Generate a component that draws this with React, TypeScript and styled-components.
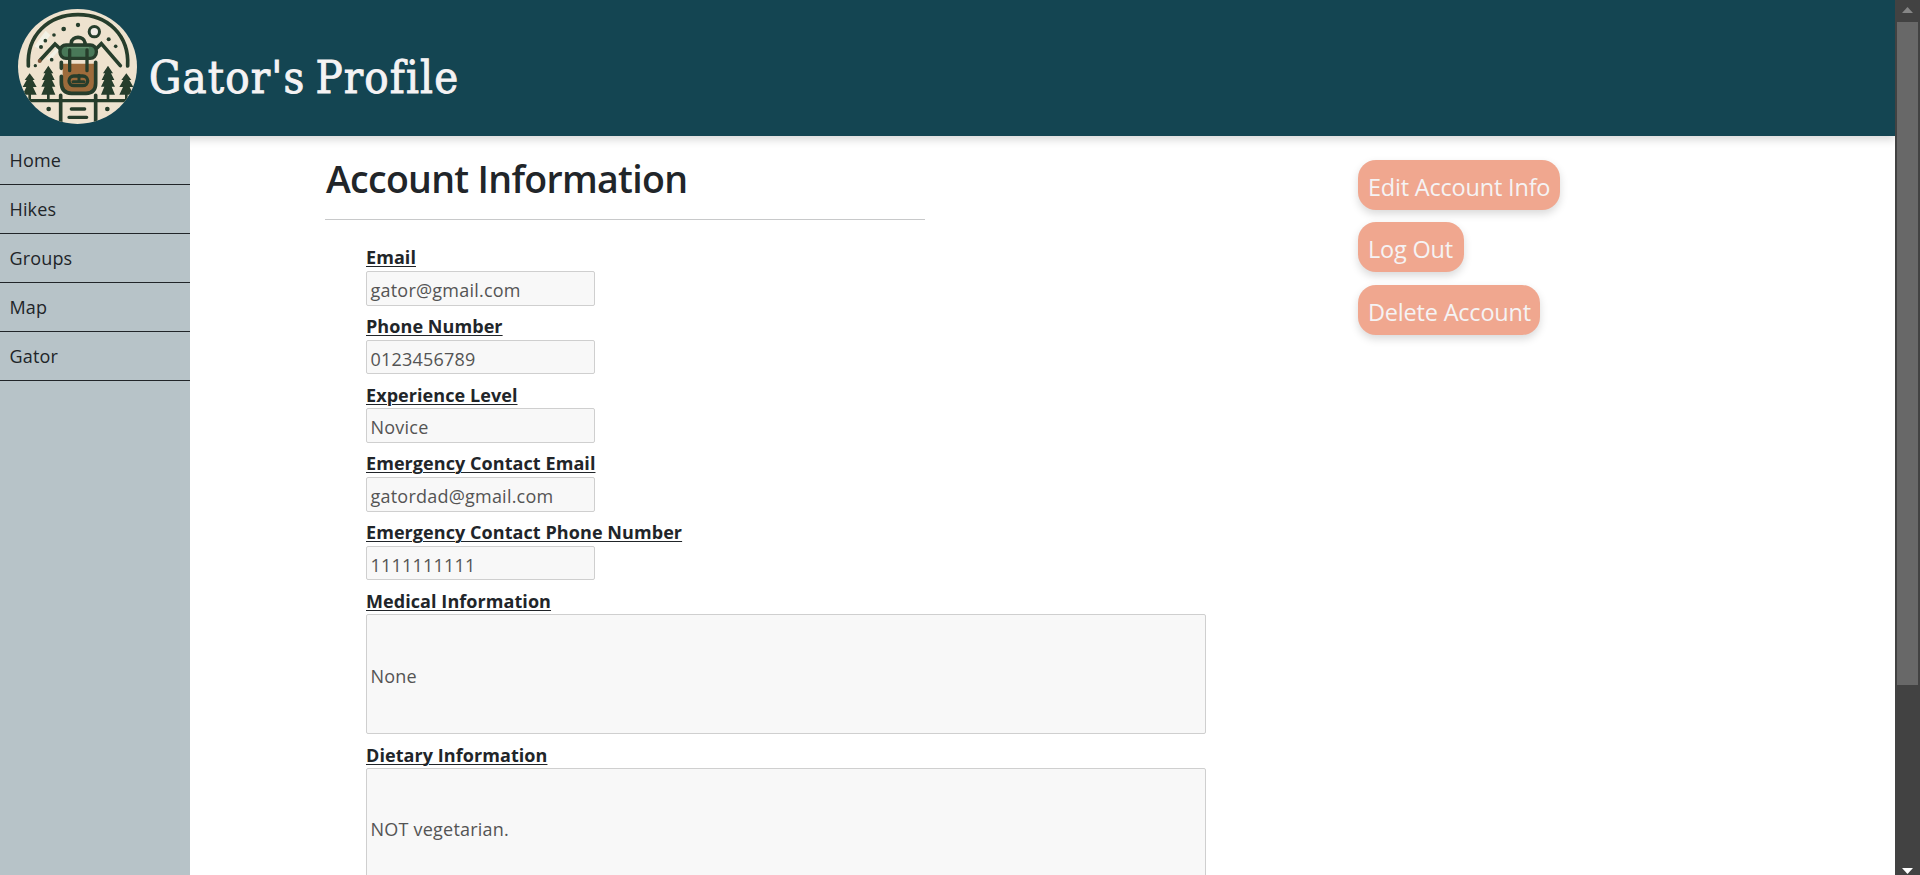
import React from "react";
import styled, { createGlobalStyle } from "styled-components";

const GlobalStyle = createGlobalStyle`
  *, *::before, *::after { box-sizing: border-box; }
  body {
    margin: 0;
    overflow: hidden;
    background: #fff;
    color: #212529;
    font-family: "Open Sans", "Noto Sans", sans-serif;
  }
`;

const Window = styled.div`
  display: flex;
  height: 875px;
  overflow: hidden;
`;

const Page = styled.div`
  display: flex;
  flex-direction: column;
  flex: 1;
  min-width: 0;
`;

const Header = styled.header`
  display: flex;
  flex: none;
  height: 136px;
  padding: 9px 0 0 18px;
  background: #144552;
  box-shadow: 0 4px 8px rgba(0, 0, 0, 0.15);
`;

const Title = styled.h1`
  margin: 33px 0 0 12px;
  color: #f5f3f4;
  font: 400 45px/72px "DejaVu Serif Condensed", "DejaVu Serif", serif;
  font-stretch: condensed;
  letter-spacing: 1.15px;
  word-spacing: -4px;
  -webkit-text-stroke: 0.9px #f5f3f4;
  white-space: nowrap;
`;

const Body = styled.div`
  display: flex;
  flex: 1;
  min-height: 0;
`;

const Sidebar = styled.nav`
  position: relative;
  flex: none;
  width: 190px;
  background: #b7c3c8;
`;

const NavLink = styled.a`
  display: block;
  height: 49px;
  padding-left: 9.5px;
  border-bottom: 1px solid #212529;
  font-size: 18px;
  font-weight: 400;
  letter-spacing: 0.15px;
  line-height: 49px;
`;

const Account = styled.main`
  flex: none;
  width: 1168px;
  padding: 16px 0 0 135px;
`;

const Heading = styled.h2`
  width: 600px;
  height: 68px;
  margin: 0;
  border-bottom: 1px solid #c8c9ca;
  font-size: 37.5px;
  font-weight: 600;
  letter-spacing: -0.7px;
  line-height: 54px;
  text-indent: 1px;
  white-space: nowrap;
`;

const Fields = styled.div`
  padding: 17px 0 0 41px;
`;

const Label = styled.div`
  height: 34px;
  padding-top: 8.4px;
  font-size: 18px;
  font-weight: 700;
  letter-spacing: 0.07px;
  line-height: 24px;
  text-decoration: underline;
  text-decoration-thickness: 1px;
  text-underline-offset: 2px;
  text-decoration-skip-ink: auto;
  white-space: nowrap;
`;

const Value = styled.div<{ $large?: boolean }>`
  display: flex;
  align-items: center;
  width: ${(p) => (p.$large ? "840px" : "229px")};
  height: ${(p) => (p.$large ? "119.7px" : "34.7px")};
  padding: 3px 3.5px 0;
  border: 1px solid #cfcfcf;
  border-radius: 2px;
  background: #f8f8f8;
  color: #545454;
  font-size: 18px;
  font-weight: 400;
  letter-spacing: 0.22px;
  white-space: nowrap;
`;

const Actions = styled.div`
  display: flex;
  flex-direction: column;
  align-items: flex-start;
  gap: 12.4px;
  padding-top: 24px;
`;

const Action = styled.button<{ $width: number }>`
  width: ${(p) => p.$width}px;
  height: 50px;
  padding: 4px 0 0 10px;
  border: 0;
  border-radius: 18px;
  background: #f0a78f;
  color: #f5f3f4;
  box-shadow: 0 4px 8px rgba(0, 0, 0, 0.15);
  font: 400 23.5px/46px "Open Sans", sans-serif;
  letter-spacing: -0.2px;
  text-align: left;
  white-space: nowrap;
`;

const Scrollbar = styled.div`
  display: flex;
  flex: none;
  flex-direction: column;
  justify-content: space-between;
  align-items: center;
  width: 25px;
  padding: 7px 0 1px;
  background: #424242;
`;

const Thumb = styled.div`
  width: 21px;
  height: 663px;
  margin: 9px 0 auto;
  background: #686868;
`;

const Arrow = styled.svg`
  display: block;
  width: 11px;
  height: 6px;
`;

const LogoSvg = styled.svg`
  flex: none;
  width: 119px;
  height: 115px;
`;

const Tree = ({ x, y }: { x: number; y: number }) => (
  <path
    transform={`translate(${x} ${y})`}
    fill="#263d2b"
    d="M0 0 L15 23 H9 L19 43 H11 L21 63 H11 L21 87 H4 V104 H-4 V87 H-21 L-11 63 H-21 L-11 43 H-19 L-9 23 H-15Z"
  />
);

const SmallTree = ({ x, y }: { x: number; y: number }) => (
  <path
    transform={`translate(${x} ${y})`}
    fill="#263d2b"
    d="M0 0 L15 20 H9 L21 41 H10 L21 64 H4 V80 H-4 V64 H-21 L-10 41 H-21 L-9 20 H-15Z"
  />
);

const dots = [
  [191, 87, 7], [234, 75, 6.5], [162, 105, 5.5], [136, 122, 5.5], [123, 141, 6],
  [155, 179, 5.5], [106, 197, 5], [326, 118, 6], [347, 139, 5.5], [146, 327, 7], [322, 327, 7],
];

const Logo = () => (
  <LogoSvg viewBox="54 27 357 345" preserveAspectRatio="none">
    <defs>
      <clipPath id="badge"><ellipse cx="232.5" cy="199.5" rx="178.5" ry="172.5" /></clipPath>
    </defs>
    <g clipPath="url(#badge)">
      <rect x="54" y="27" width="357" height="345" fill="#eee2ce" />
      <path d="M103 139 L137 92 L151 106 L118 147Z M139 177 L170 145 L177 151 L151 181Z" fill="#f2f2e6" />
      <g fill="none" stroke="#263d2b" strokeWidth="11" strokeLinecap="round" strokeLinejoin="miter">
        <path d="M85 198 C80 106 145 44 234 44 C323 44 388 106 383 198" />
        <path d="M121 180 L165 132 L181 147 M291 144 L304 131 L361 197" />
        <path d="M214 131 V128 C216 107 252 107 255 128 V131" />
      </g>
      {dots.map(([x, y, r]) => <circle key={`${x}-${y}`} cx={x} cy={y} r={r} fill="#263d2b" />)}
      <circle cx="119" cy="183" r="6" fill="#7b5439" />
      <circle cx="283" cy="95" r="15.5" fill="#f1ece6" stroke="#263d2b" strokeWidth="9" />
      <path d="M188 186 H286 V252 Q286 277 260 277 H214 Q188 277 188 252Z" fill="#9d6b3b" />
      <path d="M188 179 H286 V191 H188Z" fill="#eee2ce" />
      <path d="M184 187 V205 M184 229 V247 Q184 280 214 280 H258 Q287 280 287 250 V187" fill="none" stroke="#263d2b" strokeWidth="11" strokeLinecap="round" />
      <rect x="180" y="135" width="109" height="40" rx="18" fill="#497858" stroke="#263d2b" strokeWidth="10" />
      <path d="M201 143 H267" stroke="#6c9875" strokeWidth="3" />
      <g fill="none" stroke="#263d2b" strokeWidth="10" strokeLinecap="round">
        <path d="M209 150 V212 M261 150 V212" />
        <rect x="207" y="228" width="56" height="29" rx="14.5" />
        <path d="M219 245 H252 M237 226 V245" strokeWidth="9" />
        <path d="M60 302 H410" />
        <path d="M182 286 V372 M287 286 V372" strokeWidth="11" />
        <path d="M214 327 H254 M207 352 H260" />
      </g>
      <SmallTree x={89} y={220} />
      <Tree x={145} y={197} />
      <Tree x={324} y={197} />
      <SmallTree x={379} y={220} />
    </g>
  </LogoSvg>
);

const links = ["Home", "Hikes", "Groups", "Map", "Gator"];

const fields = [
  { label: "Email", value: "gator@gmail.com" },
  { label: "Phone Number", value: "0123456789" },
  { label: "Experience Level", value: "Novice" },
  { label: "Emergency Contact Email", value: "gatordad@gmail.com" },
  { label: "Emergency Contact Phone Number", value: "1111111111" },
  { label: "Medical Information", value: "None", large: true },
  { label: "Dietary Information", value: "NOT vegetarian.", large: true },
];

export default function App() {
  return (
    <Window>
      <GlobalStyle />
      <Page>
        <Header>
          <Logo />
          <Title>Gator's Profile</Title>
        </Header>
        <Body>
          <Sidebar>
            {links.map((l) => <NavLink key={l}>{l}</NavLink>)}
          </Sidebar>
          <Account>
            <Heading>Account Information</Heading>
            <Fields>
              {fields.map((f) => (
                <React.Fragment key={f.label}>
                  <Label><span>{f.label}</span></Label>
                  <Value $large={f.large}>{f.value}</Value>
                </React.Fragment>
              ))}
            </Fields>
          </Account>
          <Actions>
            <Action $width={202}>Edit Account Info</Action>
            <Action $width={106}>Log Out</Action>
            <Action $width={182}>Delete Account</Action>
          </Actions>
        </Body>
      </Page>
      <Scrollbar>
        <Arrow viewBox="0 0 11 6"><path d="M0 6 L5.5 0 L11 6Z" fill="#868686" /></Arrow>
        <Thumb />
        <Arrow viewBox="0 0 11 6"><path d="M0 0 H11 L5.5 6Z" fill="#fff" /></Arrow>
      </Scrollbar>
    </Window>
  );
}
